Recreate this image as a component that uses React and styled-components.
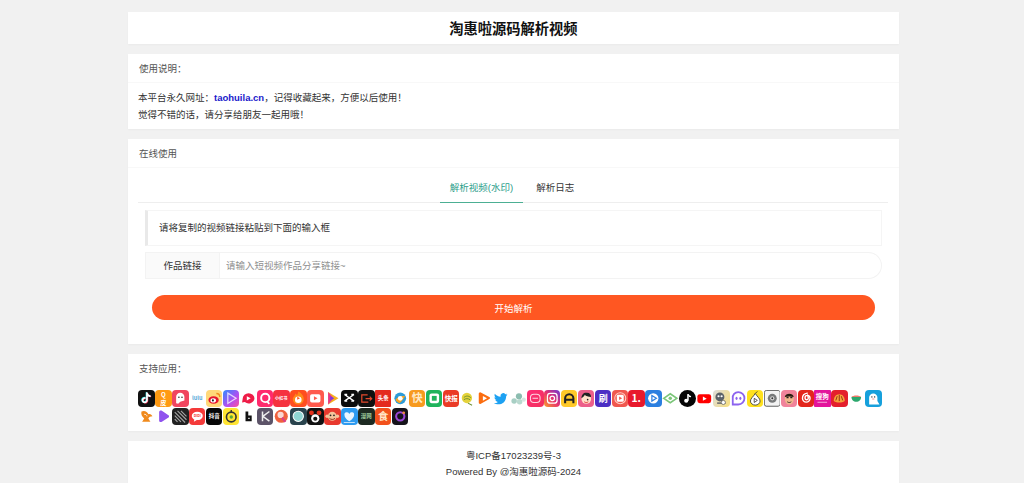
import React from "react";
import styled, { createGlobalStyle } from "styled-components";

const GlobalStyle = createGlobalStyle`
  html, body {
    margin: 0;
    padding: 0;
    background: #f1f1f1;
    color: #333;
    font-family: "Liberation Sans", "Noto Sans CJK SC", sans-serif;
    font-size: 9.5px;
  }
  * { box-sizing: border-box; }
`;

const Page = styled.div`
  width: 771px;
  margin: 0 0 0 128px;
  padding-top: 12px;
  display: flex;
  flex-direction: column;
  gap: 10px;
`;

const Card = styled.section`
  background: #fff;
  box-shadow: 0 1px 2px rgba(0, 0, 0, 0.03);
`;

const Title = styled.h1`
  margin: 0;
  height: 32px;
  line-height: 34px;
  text-align: center;
  font-size: 14.25px;
  font-weight: 700;
  color: #111;
`;

const CardHeader = styled.div`
  height: 29px;
  line-height: 29px;
  padding: 0 11px;
  color: #555;
  border-bottom: ${(p) => (p.$plain ? "none" : "1px solid #f8f8f8")};
`;

const Notes = styled.div`
  padding: 7px 10px 6px;
  line-height: 16.5px;
  color: #333;
`;

const Site = styled.a`
  color: #1a1acb;
  font-weight: 700;
  text-decoration: none;
`;

const UseBody = styled.div`
  padding: 5px 11px 24px 10px;
`;

const Tabs = styled.div`
  display: flex;
  justify-content: center;
  height: 30px;
  padding-right: 2px;
  border-bottom: 1px solid #eeeeee;
`;

const Tab = styled.div`
  height: 30px;
  line-height: 30px;
  padding: 0 10px;
  margin-right: ${(p) => (p.$active ? "3px" : "0")};
  color: ${(p) => (p.$active ? "#2a9d8a" : "#333")};
  border-bottom: ${(p) => (p.$active ? "1px solid #4caf93" : "none")};
`;

const Inset = styled.div`
  margin: 0 6px 0 7px;
`;

const Alert = styled.div`
  margin-top: 7px;
  height: 36px;
  line-height: 33px;
  padding-left: 11px;
  background: #fff;
  border: 1px solid #f5f5f5;
  border-left: 3px solid #e9e9e9;
  color: #333;
`;

const Field = styled.div`
  display: flex;
  height: 27px;
  margin-top: 6px;
`;

const FieldLabel = styled.label`
  width: 75px;
  line-height: 25px;
  text-align: center;
  background: #fafafa;
  border: 1px solid #f3f3f3;
  color: #333;
`;

const Input = styled.input`
  flex: 1;
  min-width: 0;
  padding: 0 6px;
  border: 1px solid #f3f3f3;
  border-left: none;
  border-radius: 0 14px 14px 0;
  outline: none;
  background: #fff;
  font: inherit;
  color: #333;

  &::placeholder {
    color: #8f8f8f;
  }
`;

const Submit = styled.button`
  display: block;
  width: 723px;
  height: 25px;
  margin: 16px 0 0 14px;
  padding: 0;
  border: none;
  border-radius: 13px;
  background: #ff5722;
  color: #fff;
  font: inherit;
`;

const IconWrap = styled.div`
  display: flex;
  flex-wrap: wrap;
  row-gap: 1px;
  padding: 7px 11px 6px 10px;
`;

const Tile = styled.span`
  display: block;
  width: 16.92px;
  height: 17px;
  padding: 0.2px;
`;

const TileFace = styled.span`
  display: block;
  width: 100%;
  height: 100%;
  border-radius: ${(p) => p.$r ?? 4}px;
  background: ${(p) => p.$bg};
  overflow: hidden;

  svg {
    display: block;
    width: 100%;
    height: 100%;
  }
`;

const Footer = styled.footer`
  padding: 7px 0 4px;
  text-align: center;
  line-height: 16px;
  color: #333;
`;

const Word = ({ t, s = 9, c = "#fff", y = 15.5 }) => (
  <text
    x="12"
    y={y}
    fontSize={s}
    fontWeight="700"
    fill={c}
    textAnchor="middle"
    fontFamily="'Noto Sans CJK SC', sans-serif"
  >
    {t}
  </text>
);

const Play = ({ c = "#fff", s = 1 }) => (
  <path
    d={`M${12 - 3 * s} ${12 - 4.5 * s}L${12 + 5 * s} 12L${12 - 3 * s} ${12 + 4.5 * s}Z`}
    fill={c}
  />
);

const Note = ({ c = "#fff" }) => (
  <path
    d="M13 4.5v10.2a3.2 3.2 0 1 1-3-3.2M13 4.5c.4 2.6 2 4 4.4 4.3"
    fill="none"
    stroke={c}
    strokeWidth="2.4"
    strokeLinecap="round"
  />
);

const rowOne = [
  { bg: "#111", body: <><g transform="translate(.7 .5)"><Note c="#ff2c55" /></g><g transform="translate(-.7 -.5)"><Note c="#37e6ea" /></g><Note /></> },
  { bg: "#ff9a12", body: <><Word t="Q" s={9} y={10} /><Word t="皮" s={9} y={21} /></> },
  { bg: "#f0455f", body: <><path d="M6 19V10a6 6 0 0 1 12 0v5l-6 2-3 3Z" fill="#fff" /><circle cx="10" cy="10.500" r="1.200" fill="#333" /><circle cx="14.500" cy="10.500" r="1.200" fill="#333" /></> },
  { bg: "#fff", body: <Word t="lulu" s={8} c="#58a9d8" y={15} /> },
  { bg: "#ffd879", body: <><ellipse cx="11" cy="14.500" rx="7.500" ry="5.500" fill="#e6162d" /><ellipse cx="10.500" cy="15" rx="4" ry="3" fill="#fff" /><circle cx="10" cy="15" r="1.500" fill="#222" /><path d="M15 5c3 0 5 2 5 5" fill="none" stroke="#f08c1e" strokeWidth="2" /></> },
  { bg: "linear-gradient(135deg,#2f8cff,#b44df0 60%,#ff4f9a)", body: <path d="M7 4.500L19 12 7 19.500Z" fill="none" stroke="#fff" strokeOpacity=".75" strokeWidth="1.800" /> },
  { bg: "#fff", body: <><path d="M4 12a8.500 7.500 0 0 1 17 0 8.500 7.500 0 0 1-14 5.500L3 18Z" fill="#ee1c47" /><Play s={0.7} /></> },
  { bg: "#ff2a6d", body: <><circle cx="12" cy="11.500" r="6" fill="none" stroke="#fff" strokeWidth="2.800" /><path d="M14 16l4 4" stroke="#fff" strokeWidth="2.500" /></> },
  { bg: "#f5323f", body: <Word t="小红书" s={6} y={14.500} /> },
  { bg: "#ff4e1f", body: <><path d="M12 2c6 3 8 8 8 11a8 8 0 0 1-16 0c0-3 3-4 4-8 1 1 2 2 2 3 1-2 2-4 2-6Z" fill="#ff8a1a" /><circle cx="12" cy="14" r="4.800" fill="#fff" /><Play c="#ff4e1f" s={0.5} /></> },
  { bg: "#ff5a4d", body: <><rect x="4.500" y="6" width="15" height="12" rx="2.500" fill="#fff" /><Play c="#ff5a4d" s={0.65} /></> },
  { bg: "#fff", body: <><path d="M6 3L21 12 6 21Z" fill="#f6b01e" /><path d="M6 3L14 12 6 21Z" fill="#e9368a" /><path d="M9 9L15 12 9 15Z" fill="#7c3be0" /></> },
  { bg: "#0c0c0c", body: <path d="M5 6.500L19 16M19 6.500L5 16M5 6.500h4M15 6.500h4M5 16h4M15 16h4" fill="none" stroke="#fff" strokeWidth="2" /> },
  { bg: "#101010", body: <><path d="M14 7H5.500v10.500H15" fill="none" stroke="#e2492c" strokeWidth="1.800" /><path d="M11 12.500h9M17 9.500l3 3-3 3" fill="none" stroke="#e2492c" strokeWidth="1.600" /></> },
  { bg: "#e42a1f", r: 1, body: <Word t="头条" s={8} y={15} /> },
  { bg: "#fff", body: <><circle cx="12" cy="12" r="8.500" fill="#2d9bd8" /><path d="M5 14c4-5 9-6 14-5-2 3-5 8-8 10-3-1-5-3-6-5Z" fill="#f7a321" /><circle cx="12" cy="12" r="3.500" fill="#fff" /></> },
  { bg: "#f79a1f", body: <Word t="快" s={16} y={18} c="#ffe9c4" /> },
  { bg: "#1fb35c", body: <><rect x="5" y="5" width="14" height="14" rx="3" fill="#fff" /><rect x="8.500" y="8.500" width="7" height="7" fill="#1fb35c" /></> },
  { bg: "#ea3b26", body: <Word t="快报" s={9.500} y={15.500} /> },
  { bg: "#fff", body: <><circle cx="11.500" cy="11.500" r="7.500" fill="#e5d33c" /><path d="M7 11c3-3 7-3 10 0M7 14c3-2 6-2 9 0" fill="none" stroke="#6a8f2f" strokeWidth="1.400" /><path d="M13 19l6 3" stroke="#6a8f2f" strokeWidth="1.500" /></> },
  { bg: "#fff", body: <><path d="M4 5a2 2 0 0 1 3-1.500l13 7a2 2 0 0 1 0 2l-13 7.500a2 2 0 0 1-3-1.500Z" fill="#fb6d10" /><path d="M10 8.500L16 12l-6 3.500Z" fill="#fff" /></> },
  { bg: "#fff", body: <path d="M21 6.500c-.7.4-1.500.6-2.300.7.900-.5 1.500-1.300 1.800-2.200-.8.500-1.700.800-2.600 1a4 4 0 0 0-6.900 3.700C7.700 9.500 4.700 8 2.700 5.500c-1 1.800-.5 4.100 1.200 5.300-.6 0-1.300-.2-1.800-.5 0 1.900 1.300 3.600 3.200 4-.6.2-1.200.2-1.800.1.500 1.600 2 2.700 3.700 2.800-1.700 1.300-3.900 1.900-6 1.700 6.500 4.100 17.700 1.800 18-10.300.8-.6 1.400-1.300 1.800-2.100Z" fill="#1da1f2" /> },
  { bg: "#fff", body: <><circle cx="6" cy="16" r="4" fill="#a8cfc4" /><circle cx="13" cy="9" r="4.500" fill="#8cbdb0" /><circle cx="14" cy="17" r="4" fill="#b9d9cf" /><circle cx="20" cy="14" r="3" fill="#d5e6e0" /></> },
  { bg: "linear-gradient(135deg,#ff2d78,#f2305c)", body: <><rect x="5" y="6" width="14" height="12" rx="5" fill="none" stroke="#fff" strokeOpacity=".8" strokeWidth="1.500" /><path d="M8 12h8" stroke="#fff" strokeOpacity=".8" strokeWidth="1.500" /></> },
  { bg: "linear-gradient(45deg,#f9a02c,#e8306e 50%,#6a3bd6)", body: <><rect x="5" y="5" width="14" height="14" rx="4" fill="none" stroke="#fff" strokeWidth="1.800" /><circle cx="12" cy="12" r="3.300" fill="none" stroke="#fff" strokeWidth="1.800" /></> },
  { bg: "#ffc928", body: <path d="M6 19v-7a6 6 0 0 1 12 0v7M6 14h12" fill="none" stroke="#222" strokeWidth="3" /> },
  { bg: "#ec5f8a", body: <><circle cx="12" cy="13" r="7" fill="#ffe1c9" /><path d="M5 12c0-6 4-9 8-8 4 0 6 3 6 6-4 0-8-1-9-3-1 2-3 4-5 5Z" fill="#222" /><circle cx="14" cy="14" r="1.200" fill="#222" /><path d="M9 17c2 1.500 4 1.500 6 0" stroke="#d22" strokeWidth="1.200" fill="none" /></> },
  { bg: "#4b2fc4", body: <Word t="刷" s={13} y={17} /> },
  { bg: "#f0584f", body: <><circle cx="12" cy="12" r="8" fill="none" stroke="#ffd0c8" strokeWidth="1.500" /><rect x="7" y="7" width="10" height="10" rx="2" fill="#fff" /><Play c="#f0584f" s={0.55} /></> },
  { bg: "#e8192c", body: <Word t="1." s={15} y={17.500} /> },
  { bg: "#2b7fe0", body: <><circle cx="12" cy="12" r="7.500" fill="#fff" /><path d="M10 8L16.500 12 10 16Z" fill="none" stroke="#2b7fe0" strokeWidth="1.800" /></> },
  { bg: "#fff", body: <><path d="M2.500 12L12 5.500 21.500 12 12 18.500Z" fill="none" stroke="#7cc67a" strokeWidth="2.400" /><circle cx="12" cy="12" r="2.500" fill="#7cc67a" /></> },
  { bg: "#050505", r: 9, body: <><path d="M13 6v9.500" stroke="#fff" strokeWidth="2.200" /><circle cx="10.500" cy="15.500" r="3" fill="#fff" /><path d="M13 6c1 2.500 2.500 3.500 4.500 3.500" stroke="#fff" strokeWidth="2" fill="none" /></> },
  { bg: "#fff", body: <><rect x="2" y="6" width="20" height="13" rx="3.500" fill="#f00" /><path d="M10 9.500L15.500 12.500 10 15.500Z" fill="#fff" /></> },
  { bg: "linear-gradient(120deg,#ddd,#f7de7c)", body: <><circle cx="10" cy="10" r="6.500" fill="#5b6269" /><circle cx="8" cy="9" r="1.600" fill="#fff" /><circle cx="12.500" cy="9" r="1.600" fill="#fff" /><path d="M6 19h12" stroke="#777" strokeWidth="2.500" /><circle cx="15" cy="18" r="3" fill="#fff" stroke="#555" /></> },
  { bg: "#fff", body: <><path d="M12 3a9 9 0 0 1 9 9c0 5-4 9-9 9H4v-9a8 8 0 0 1 8-9Z" fill="none" stroke="#8c63ef" strokeWidth="2.600" /><ellipse cx="9.500" cy="12" rx="1.500" ry="2.300" fill="#8c63ef" /><ellipse cx="15" cy="12" rx="1.500" ry="2.300" fill="#8c63ef" /></> },
  { bg: "#ffe11d", body: <><path d="M12 5c3 5 7 7 7 11a6 5 0 0 1-14 0c0-4 4-6 7-11Z" fill="#fff" stroke="#333" strokeWidth="1.200" /><path d="M10.500 12L15 15l-4.500 3Z" fill="none" stroke="#333" strokeWidth="1.200" /><path d="M12 5l3-3" stroke="#333" strokeWidth="1.200" /></> },
  { bg: "#f3f3f3", r: 2, body: <><rect x=".5" y=".5" width="23" height="23" rx="3" fill="none" stroke="#222" /><circle cx="12" cy="12" r="6.500" fill="#77797a" /><circle cx="12" cy="12" r="3" fill="#d6d6d6" /><circle cx="12" cy="12" r="1.400" fill="#333" /></> },
  { bg: "#f0839b", body: <><ellipse cx="12" cy="13" rx="6.500" ry="8" fill="#f1b68d" /><path d="M5.500 10c1-6 12-6 13 0-4-1-9-1-13 0Z" fill="#2a1b12" /><path d="M8 11h3M13.500 11h3" stroke="#222" strokeWidth="1.500" /><path d="M9 17c2 1.500 4 1.500 6 0" stroke="#222" strokeWidth="1.200" fill="none" /></> },
  { bg: "#e3261c", body: <path d="M13.500 4.500c-4 .6-7 3.500-7 7.500a5.500 5.500 0 0 0 11 0c0-2.500-2-4.300-4-4.300s-3.300 1.700-3.300 3.500 1.200 2.800 2.600 2.800c1.200 0 2.200-1 2.200-2.300L14 7" fill="none" stroke="#fff" strokeWidth="2" strokeLinecap="round" /> },
  { bg: "#e3149c", r: 1, body: <><Word t="搜狗" s={9.500} y={13} /><rect x="5" y="17" width="14" height="1.500" fill="#fff" opacity=".6" /></> },
  { bg: "#e41f2d", body: <><path d="M4 16c0-6 3-10 8-10s8 4 8 10c-5 3-11 3-16 0Z" fill="#f7a13a" /><path d="M7 15l2-6M12 16V7M17 15l-2-6" stroke="#8a2a12" strokeWidth="1.300" /></> },
  { bg: "#fff", body: <><path d="M5 10h14c0 4-3 7-7 7s-7-3-7-7Z" fill="#2ca76d" /><path d="M5 10c2-3 12-3 14 0Z" fill="#ef7a6c" /></> },
  { bg: "#16a0dc", body: <><path d="M6 21V11a6 6 0 0 1 12 0v5l3 5Z" fill="#fff" /><circle cx="10" cy="10" r="1" fill="#222" /><circle cx="14" cy="10" r="1" fill="#222" /><path d="M10.500 13h3" stroke="#e77" strokeWidth="1.200" /></> },
];

const rowTwo = [
  { bg: "#fff", body: <><path d="M5 5c4-2 9 0 10 4 3-1 5 1 6 3-3 0-5 1-6 3l3 5H6l3-5C6 13 4 9 5 5Z" fill="#f08a1d" /><path d="M9 9c2 0 4 1 4 3" stroke="#fff" strokeWidth="1.300" fill="none" /></> },
  { bg: "#fff", body: <path d="M6 6c0-2 2-3 4-2l9 6c2 1 2 3 0 4l-9 6c-2 1-4 0-4-2Z" fill="#8f52ee" /> },
  { bg: "#222", body: <path d="M4 6l15 15M8 4l13 13M4 11l9 9M13 4l8 8M4 16l4 4" stroke="#a5a5a5" strokeWidth="1.600" /> },
  { bg: "#f43a3a", body: <><ellipse cx="12" cy="11.500" rx="8" ry="6" fill="#fff" /><path d="M8 16l-1 4 5-3Z" fill="#fff" /><Word t="DIDI" s={5} c="#f43a3a" y={13.500} /></> },
  { bg: "#070707", body: <Word t="抖音" s={8} y={15} /> },
  { bg: "#ffe433", body: <><circle cx="12" cy="13" r="7" fill="none" stroke="#333" strokeWidth="2.400" /><circle cx="12" cy="13" r="2.500" fill="#59a83a" /><path d="M12 3v4" stroke="#333" strokeWidth="2" /></> },
  { bg: "#fff", body: <path d="M8 5v14h9v-8h-5V5Zm4 9h2v2h-2Z" fill="#111" fillRule="evenodd" /> },
  { bg: "#5c5368", body: <path d="M8 5v14M18 5l-9.500 7L18 19" fill="none" stroke="#eee" strokeWidth="2.200" /> },
  { bg: "#fff", body: <><circle cx="12" cy="12" r="9.500" fill="#f0613e" /><circle cx="11" cy="10" r="4.500" fill="#fbd7d2" /><path d="M13 14l5 6" stroke="#d93e8b" strokeWidth="3" /></> },
  { bg: "#29434d", body: <circle cx="12" cy="12" r="7.500" fill="#8fd6d3" stroke="#fff" strokeWidth="1.500" /> },
  { bg: "#111", body: <><circle cx="6.500" cy="7" r="3.500" fill="#e2321e" /><circle cx="17.500" cy="7" r="3.500" fill="#e2321e" /><circle cx="12" cy="15" r="6" fill="#fff" /><circle cx="12" cy="15.500" r="3" fill="#111" /></> },
  { bg: "#e8392e", body: <><circle cx="12" cy="12" r="6.500" fill="#f4c39b" /><circle cx="4.500" cy="12" r="2.500" fill="#f4c39b" /><circle cx="19.500" cy="12" r="2.500" fill="#f4c39b" /><circle cx="9.500" cy="10.500" r="1.300" fill="#222" /><circle cx="14.500" cy="10.500" r="1.300" fill="#222" /><path d="M8 15c2 2 6 2 8 0" stroke="#8a2a12" strokeWidth="1.400" fill="none" /></> },
  { bg: "#2e9bf0", body: <><path d="M12 19c-5-3-7-6-7-9a3.500 3.500 0 0 1 7-1 3.500 3.500 0 0 1 7 1c0 3-2 6-7 9Z" fill="#fff" opacity=".9" /><path d="M4 21h16" stroke="#bfe0fb" strokeWidth="1.500" /></> },
  { bg: "#1d2a22", body: <Word t="漫网" s={8} c="#9bc79a" y={15} /> },
  { bg: "#f2511c", body: <Word t="食" s={15} c="#ffe6c8" y={18} /> },
  { bg: "#15131a", body: <><circle cx="12" cy="12" r="6" fill="none" stroke="#9a46d8" strokeWidth="3" /><circle cx="17" cy="7" r="2" fill="#f08a3c" /></> },
];

const AppIcon = ({ bg, r, body }) => (
  <Tile>
    <TileFace $bg={bg} $r={r}>
      <svg viewBox="0 0 24 24" aria-hidden="true">
        {body}
      </svg>
    </TileFace>
  </Tile>
);

export default function App() {
  return (
    <>
      <GlobalStyle />
      <Page>
        <Card>
          <Title>淘惠啦源码解析视频</Title>
        </Card>

        <Card>
          <CardHeader>使用说明：</CardHeader>
          <Notes>
            本平台永久网址：<Site href="#">taohuila.cn</Site>，记得收藏起来，方便以后使用！
            <br />
            觉得不错的话，请分享给朋友一起用哦！
          </Notes>
        </Card>

        <Card>
          <CardHeader>在线使用</CardHeader>
          <UseBody>
            <Tabs>
              <Tab $active>解析视频(水印)</Tab>
              <Tab>解析日志</Tab>
            </Tabs>
            <Inset>
              <Alert>请将复制的视频链接粘贴到下面的输入框</Alert>
              <Field>
                <FieldLabel>作品链接</FieldLabel>
                <Input placeholder="请输入短视频作品分享链接~" />
              </Field>
            </Inset>
            <Submit>开始解析</Submit>
          </UseBody>
        </Card>

        <Card>
          <CardHeader $plain>支持应用：</CardHeader>
          <IconWrap>
            {[...rowOne, ...rowTwo].map((icon, i) => (
              <AppIcon key={i} {...icon} />
            ))}
          </IconWrap>
        </Card>

        <Card>
          <Footer>
            粤ICP备17023239号-3
            <br />
            Powered By @淘惠啦源码-2024
          </Footer>
        </Card>
      </Page>
    </>
  );
}
